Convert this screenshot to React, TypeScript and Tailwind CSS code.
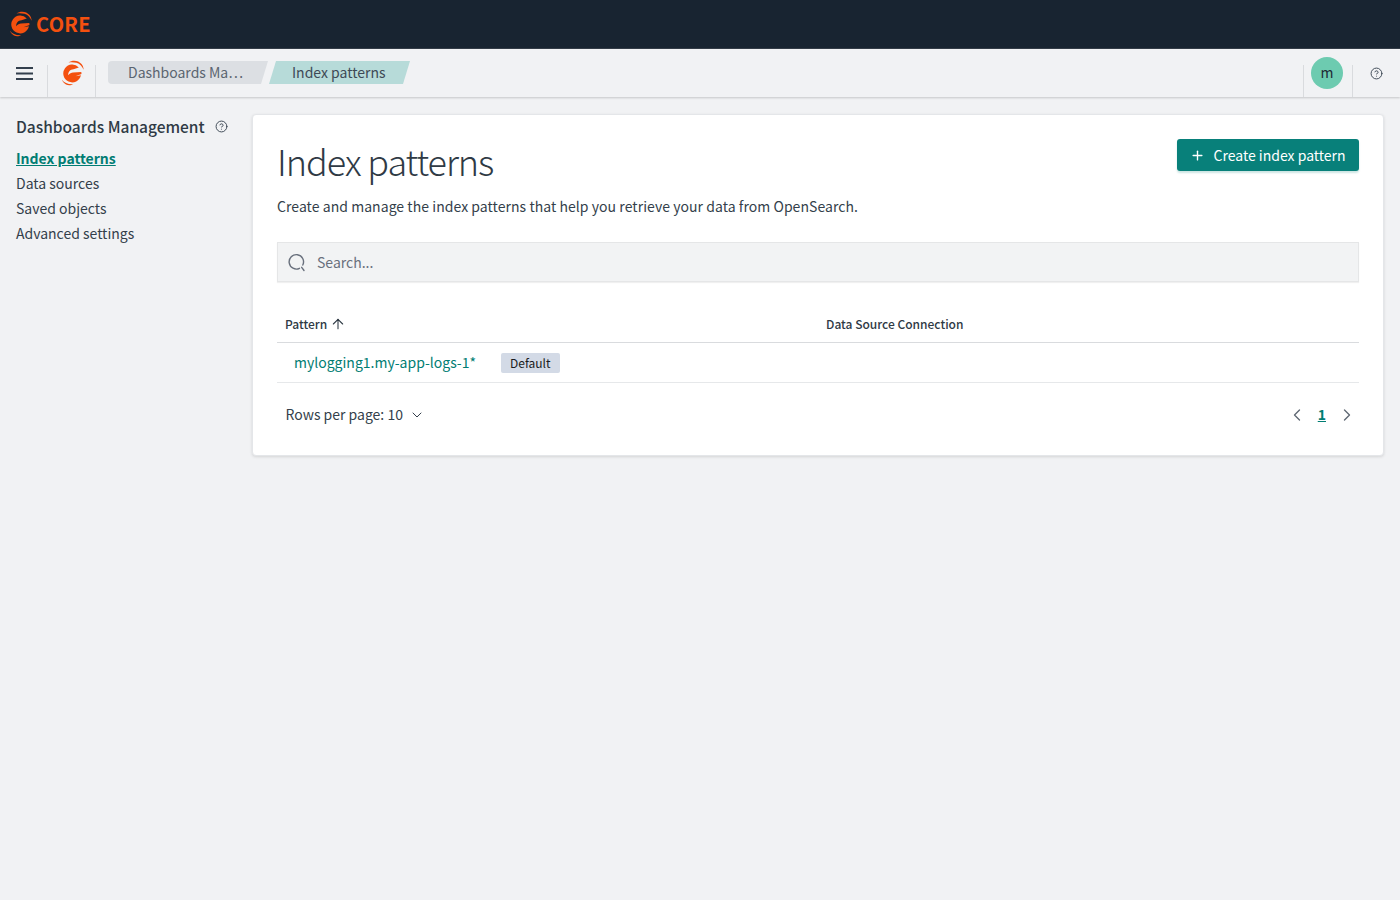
import { ArrowUp, ChevronDown, ChevronLeft, ChevronRight, CircleHelp, Plus } from 'lucide-react';

const FONT = "font-['Noto_Sans_CJK_JP','Liberation_Sans',sans-serif]";

const NAV_LINKS = ['Data sources', 'Saved objects', 'Advanced settings'];

function LogoMark({ className }: { className?: string }) {
  return (
    <svg viewBox="0 0 24 26" className={className}>
      {/* body of the G: wide slit over the bar, thin slit under its tip */}
      <path fill="#f4500f" d="M18.800 7.500A8.900 8.900 0 1 0 20.900 15.300L15.500 16.200 21.500 13.900 21.300 11.900 13 12.600C11.300 12.800 9.700 13.500 8.200 15.200 8.100 12.300 10 9.300 13.500 9.300z" />
      <path fill="#f4500f" d="M8.500 2.400C12.500-.4 18.500.1 21.500 4.100c1.300 1.700 2 3.400 2.100 5.600-1.300-3.200-3.500-6-7.100-7-2.500-.6-5.300-.7-8-.3z" />
      <path fill="#f4500f" d="M2 19.800c2.200 3 5.800 4.600 11 4.400-1.800 1.200-4.800 1.500-7 .3-1.800-1-3.300-2.700-4-4.700z" />
    </svg>
  );
}

function SearchIcon() {
  return (
    <svg viewBox="0 0 20 20" className="h-[20px] w-[20px]" fill="none" stroke="#69707d" strokeWidth="1.4" strokeLinecap="round">
      <path d="M12.500 16.300A7.200 7.200 0 1 1 15.800 13" />
      <path d="M14.700 15.300 17 18.500" />
    </svg>
  );
}

function MenuIcon() {
  return (
    <svg viewBox="0 0 17 13" className="h-[13px] w-[17px]" fill="none" stroke="#333f4d" strokeWidth="1.800">
      <path d="M0 1h17M0 6.500h17M0 12h17" />
    </svg>
  );
}

function TopBar() {
  return (
    <header className="flex h-[49px] items-center border-b border-[#343d48] bg-[#182431] pl-[8px]">
      <LogoMark className="h-[26px] w-[24px]" />
      <span className="ml-[4px] text-[20px] leading-none font-bold tracking-[0.3px] text-[#f4500f]">CORE</span>
    </header>
  );
}

function NavBar() {
  return (
    <nav className="flex h-[48px] items-stretch bg-[#f1f2f4] shadow-[0_1px_2px_rgba(0,0,0,0.18)]">
      <div className="mt-[16px] flex w-[48px] items-center justify-center border-r border-[#d9dbde] pb-[15px] pl-[1px]">
        <MenuIcon />
      </div>
      <div className="mt-[16px] flex w-[48px] items-center justify-center border-r border-[#d9dbde] pb-[16px]">
        <LogoMark className="h-[26px] w-[24px]" />
      </div>
      <div className="ml-[12px] flex items-center pb-[1px]">
        <div className="flex h-[23px] w-[160px] items-center rounded-l-[4px] bg-[#dcdfe3] pl-[20px] text-[14px] text-[#5b6570] [clip-path:polygon(0_0,100%_0,calc(100%-7px)_100%,0_100%)]">
          Dashboards Ma…
        </div>
        <div className="ml-[1px] flex h-[23px] w-[141px] items-center bg-[#b7dbd9] pl-[23px] text-[14px] text-[#3e4a56] [clip-path:polygon(7px_0,100%_0,calc(100%-7px)_100%,0_100%)]">
          Index patterns
        </div>
      </div>
      <div className="ml-auto flex">
        <div className="mt-[16px] flex w-[50px] items-start justify-center border-x border-[#d9dbde] pr-[2px]">
          <div className="-mt-[8px] flex h-[32px] w-[32px] items-center justify-center rounded-full bg-[#6dcbb0] pb-[1px] text-[14px] text-[#1f2a36]">m</div>
        </div>
        <div className="mt-[16px] flex w-[47px] items-start justify-center pr-[1px]">
          <CircleHelp className="mt-[2px] h-[13px] w-[13px] text-[#3f4a56]" strokeWidth={1.8} />
        </div>
      </div>
    </nav>
  );
}

function Sidebar() {
  return (
    <aside className="w-[252px] shrink-0 pt-[17px] pl-[16px]">
      <div className="flex items-center">
        <h2 className="text-[15.5px] leading-[24px] font-medium text-[#2f3a45]">Dashboards Management</h2>
        <CircleHelp className="ml-[10px] h-[13px] w-[13px] text-[#3f4a56]" strokeWidth={1.8} />
      </div>
      <ul className="mt-[8px] text-[14px] leading-[25px] text-[#343f4b]">
        <li className="font-bold text-[#017d73] underline">Index patterns</li>
        {NAV_LINKS.map((l) => (
          <li key={l}>{l}</li>
        ))}
      </ul>
    </aside>
  );
}

function PatternsCard() {
  return (
    <section className="h-[342px] w-[1132px] rounded-[4px] border border-[#e4e6e9] bg-white px-[24px] pt-[23px] shadow-[0_1px_3px_rgba(0,0,0,0.12)]">
      <div className="flex items-start justify-between">
        <div>
          <h1 className="-mt-[2px] text-[36px] leading-[48px] font-light tracking-[-1.05px] text-[#2f3a45]">Index patterns</h1>
          <p className="mt-[10px] text-[14px] leading-[24px] tracking-[0.05px] text-[#343f4b]">
            Create and manage the index patterns that help you retrieve your data from OpenSearch.
          </p>
        </div>
        <button className="mt-[1px] flex h-[32px] w-[182px] items-center rounded-[3px] bg-[#08807a] pl-[13px] text-[14px] text-white shadow-[0_2px_2px_rgba(1,125,115,0.2)]">
          <Plus className="h-[15px] w-[15px]" strokeWidth={2.2} />
          <span className="ml-[8.5px]">Create index pattern</span>
        </button>
      </div>

      <div className="mt-[24px] flex h-[40px] items-center bg-[#f2f3f4] pl-[10px] text-[14px] text-[#69707d] shadow-[inset_0_0_0_1px_rgba(0,0,0,0.05),0_1px_1px_rgba(0,0,0,0.06)]">
        <SearchIcon />
        <span className="ml-[10px]">Search...</span>
      </div>

      <div className="mt-[25px] flex h-[36px] items-center border-b border-[#d9dbde] pb-[1px] text-[12px] font-medium text-[#2f3a45]">
        <div className="flex w-[549px] items-center pl-[8px]">
          Pattern
          <ArrowUp className="ml-[3px] h-[16px] w-[16px]" strokeWidth={1.6} />
        </div>
        <div>Data Source Connection</div>
      </div>
      <div className="flex h-[40px] items-center border-b border-[#e6e8ea] pl-[17px]">
        <a className="text-[14px] text-[#017d73]">mylogging1.my-app-logs-1*</a>
        <span className="ml-[25px] rounded-[2px] bg-[#d3dae6] px-[9px] text-[12px] leading-[20px] text-[#1a1c21]">Default</span>
      </div>

      <div className="mt-[21px] flex items-center justify-between pl-[8.5px] text-[14px] text-[#343f4b]">
        <div className="flex items-center">
          Rows per page: 10
          <ChevronDown className="ml-[6.500px] h-[16px] w-[16px]" strokeWidth={1.5} />
        </div>
        <div className="flex items-center pr-[2px]">
          <ChevronLeft className="h-[20px] w-[20px] text-[#5f6873]" strokeWidth={1.6} />
          <span className="mx-[11px] text-[14px] font-bold text-[#017d73] underline">1</span>
          <ChevronRight className="h-[20px] w-[20px] text-[#5f6873]" strokeWidth={1.6} />
        </div>
      </div>
    </section>
  );
}

export default function App() {
  return (
    <div className={`${FONT} min-h-[900px] bg-[#f1f2f4]`}>
      <TopBar />
      <NavBar />
      <main className="flex">
        <Sidebar />
        <div className="pt-[17px]">
          <PatternsCard />
        </div>
      </main>
    </div>
  );
}
